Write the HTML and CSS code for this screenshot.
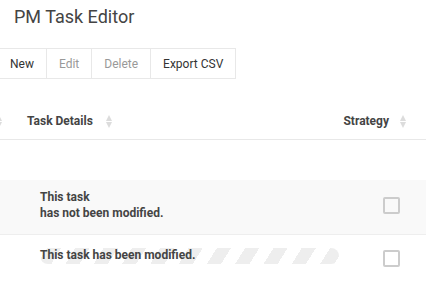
FILE: index.html
```html
<!DOCTYPE html>
<html lang="en">
<head>
    <meta charset="UTF-8">
    <title>PM Task Editor</title>
    <link rel="stylesheet" href="styles.css">
</head>
<body>
    <div id="main">
        <h1 class="title">PM Task Editor</h1>

        <div class="btn-group">
            <button class="btn">New</button>
            <button class="btn disabled">Edit</button>
            <button class="btn disabled">Delete</button>
            <button class="btn">Export CSV</button>
        </div>

        <div class="table">
            <div class="thead">
                <div class="th th-first"><span class="sort"></span></div>
                <div class="th th-details">Task Details<span class="sort"></span></div>
                <div class="th th-strategy">Strategy<span class="sort"></span></div>
            </div>
            <div class="row row-empty"></div>
            <div class="row row-odd">
                <div class="cell cell-details">This task<br>has not been modified.</div>
                <div class="cell cell-check"><span class="checkbox"></span></div>
            </div>
            <div class="row row-even">
                <div class="cell cell-details"><span class="modified">This task has been modified.</span></div>
                <div class="cell cell-check"><span class="checkbox"></span></div>
            </div>
        </div>
    </div>
</body>
</html>
```

FILE: styles.css
```css
*{
    margin: 0;
    padding: 0;
    box-sizing: border-box;
}
body{
    font-family: Roboto, "Liberation Sans", sans-serif;
    color: #444;
    background: #fff;
    overflow: hidden;
}
.title{
    font-size: 18px;
    font-weight: normal;
    color: #444;
    padding: 6px 0 0 14px;
    height: 48px;
}
.btn-group{
    display: flex;
    margin-left: -1px;
}
.btn{
    font: 12px Roboto, sans-serif;
    color: #333;
    background: #fff;
    border: 1px solid #e8e8e8;
    border-left: none;
    height: 31px;
    padding: 0 12px;
}
.btn:first-child{
    border-left: 1px solid #e8e8e8;
    padding-left: 10px;
}
.btn.disabled{
    color: #999;
}
.table{
    margin-top: 21px;
}
.thead{
    display: flex;
    align-items: center;
    height: 40px;
    padding-top: 3px;
    border-bottom: 1px solid #e8e8e8;
    font-size: 12px;
    font-weight: bold;
}
.th{
    display: flex;
    align-items: center;
}
.th-first{
    width: 31px;
    margin-left: -4px;
}
.th-details{
    flex: 1;
}
.th-strategy{
    padding-right: 20px;
}
.sort{
    display: inline-flex;
    flex-direction: column;
    gap: 1px;
    margin-left: 13px;
}
.sort::before,
.sort::after{
    content: "";
    border-left: 3.5px solid transparent;
    border-right: 3.5px solid transparent;
}
.sort::before{
    border-bottom: 6px solid #dcdcdc;
}
.sort::after{
    border-top: 6px solid #dcdcdc;
}
.th-first .sort{
    margin-left: 0;
}
.th-strategy .sort{
    margin-left: 11px;
}
.row{
    display: flex;
    align-items: flex-start;
    height: 55px;
    border-bottom: 1px solid #eee;
    font-size: 12px;
    font-weight: bold;
}
.row-empty{
    height: 40px;
    border-bottom: none;
}
.row-odd{
    background: #f9f9f9;
}
.row-even{
    border-bottom: none;
}
.cell-details{
    flex: 1;
    padding: 9px 0 0 40px;
    line-height: 16px;
}
.row-even .cell-details{
    padding-top: 12px;
}
.modified{
    display: inline-block;
    width: 299px;
    height: 16px;
    line-height: 14px;
    border-radius: 8px;
    background: repeating-linear-gradient(122deg, transparent 0 6px, #eeeeee 6px 18px, transparent 18px 24px);
}
.cell-check{
    width: 68px;
    display: flex;
    justify-content: center;
    padding: 17px 26px 0 25px;
}
.row-even .cell-check{
    padding-top: 15px;
}
.checkbox{
    width: 17px;
    height: 17px;
    border: 2px solid #ccc;
    border-radius: 2px;
    background: #fff;
    flex: none;
}
.row-odd .checkbox{
    background: transparent;
}
```
